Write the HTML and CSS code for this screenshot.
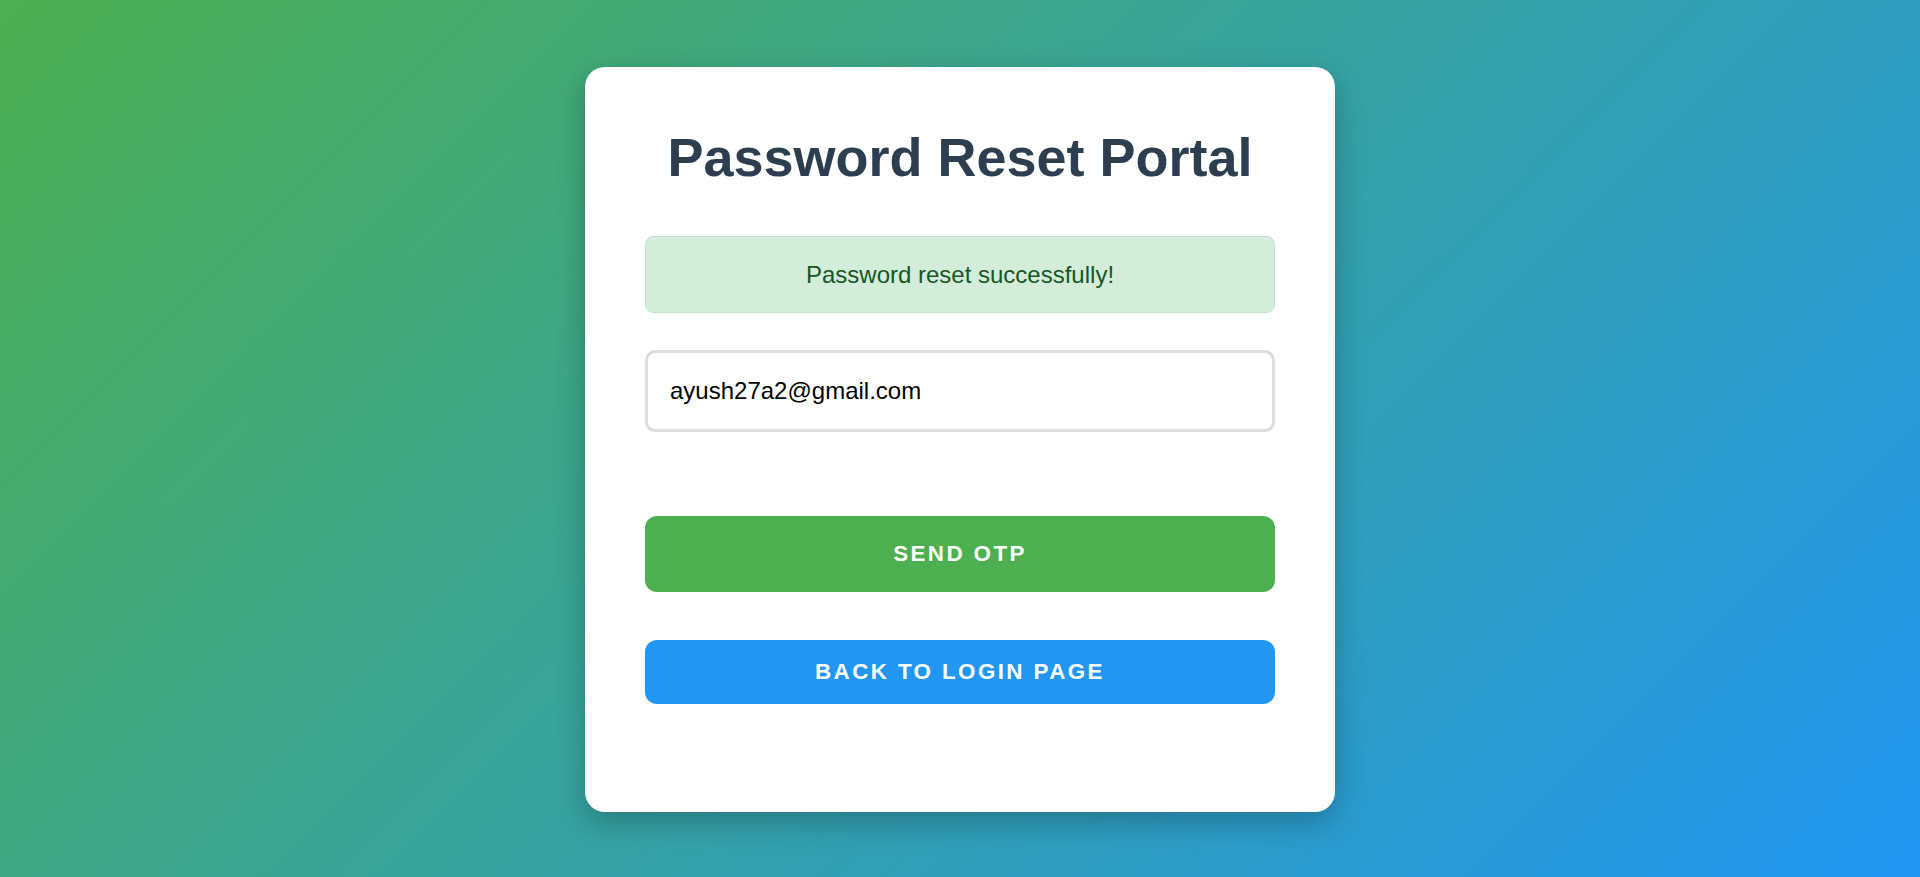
FILE: index.html
```html
<!DOCTYPE html>
<html lang="en">
<head>
<meta charset="UTF-8">
<title>Password Reset Portal</title>
<link rel="stylesheet" href="styles.css">
</head>
<body>
  <main class="card">
    <h1 class="title">Password Reset Portal</h1>
    <div class="alert">Password reset successfully!</div>
    <input class="field" type="email" value="ayush27a2@gmail.com">
    <button class="btn btn-send">SEND OTP</button>
    <button class="btn btn-back">BACK TO LOGIN PAGE</button>
  </main>
</body>
</html>
```

FILE: styles.css
```css
* { box-sizing: border-box; }

html, body { height: 100%; }

body {
  margin: 0;
  padding-top: 2px;
  min-height: 100vh;
  display: flex;
  align-items: center;
  justify-content: center;
  background: linear-gradient(135deg, #4CAF50 0%, #2196F3 100%);
  font-family: "Liberation Sans", Arial, sans-serif;
}

.card {
  width: 750px;
  padding: 60px;
  background: #fff;
  border-radius: 20px;
  box-shadow: 0 10px 30px rgba(0, 0, 0, 0.25);
  display: flex;
  flex-direction: column;
}

.title {
  margin: 0 0 49px;
  font-size: 54px;
  line-height: 60px;
  font-weight: 700;
  color: #2c3e50;
  text-align: center;
}

.alert {
  padding: 24px;
  border: 1px solid #c3e6cb;
  background: #d4edda;
  color: #155724;
  border-radius: 8px;
  font-size: 24px;
  line-height: 27px;
  text-align: center;
  margin-bottom: 37px;
}

.field {
  height: 82px;
  width: 100%;
  padding: 0 22px;
  border: 3px solid #ddd;
  border-radius: 10px;
  font-family: "Liberation Sans", Arial, sans-serif;
  font-size: 24px;
  color: #000;
  background: #fff;
  outline: none;
  margin: 0 0 84px;
}

.btn {
  width: 100%;
  border: none;
  border-radius: 12px;
  color: #fff;
  font-family: "Liberation Sans", Arial, sans-serif;
  font-size: 22.4px;
  font-weight: 700;
  letter-spacing: 2.4px;
  cursor: pointer;
  padding: 0;
}

.btn-send {
  height: 76px;
  background: #4CAF50;
  margin-bottom: 48px;
}

.btn-back {
  height: 64px;
  background: #2196F3;
  margin-bottom: 48px;
}
```
